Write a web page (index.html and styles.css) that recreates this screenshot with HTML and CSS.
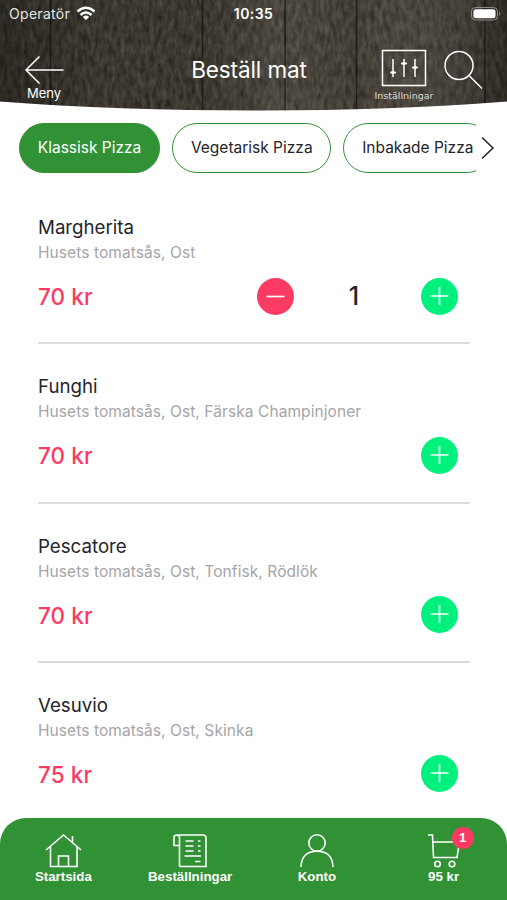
FILE: index.html
```html
<!DOCTYPE html>
<html lang="sv">
<head>
  <meta charset="UTF-8" />
  <meta name="viewport" content="width=device-width, initial-scale=1.0"/>
  <title>Beställ mat</title>
  <link rel="stylesheet" href="styles.css">
</head>
<body>

  <div class="app">
    <header class="header">
      <svg class="wood" viewBox="0 0 507 112" preserveAspectRatio="none">
        <defs>
          <filter id="grain" x="0" y="0" width="100%" height="100%" color-interpolation-filters="sRGB">
            <feTurbulence type="fractalNoise" baseFrequency="0.24 0.09" numOctaves="4" seed="7"/>
            <feColorMatrix values="0.22 0.08 0 0 0.095  0.22 0.08 0 0 0.08  0.2 0.08 0 0 0.055  0 0 0 0 1"/>
          </filter>
          <clipPath id="curve">
            <path d="M0 0H507V101.500Q390 110.500 260 110.500Q120 110.500 0 101.500Z"/>
          </clipPath>
          <linearGradient id="shade">
            <stop offset="0" stop-color="#000" stop-opacity=".3"/>
            <stop offset=".2" stop-color="#000" stop-opacity=".06"/>
            <stop offset=".4" stop-color="#000" stop-opacity=".04"/>
            <stop offset=".55" stop-color="#fff" stop-opacity=".07"/>
            <stop offset=".7" stop-color="#fff" stop-opacity=".02"/>
            <stop offset="1" stop-color="#000" stop-opacity=".28"/>
          </linearGradient>
        </defs>
        <g clip-path="url(#curve)">
          <rect width="507" height="112" filter="url(#grain)"/>
          <rect width="507" height="112" fill="url(#shade)"/>
          <g stroke="#12100d" stroke-opacity=".7" stroke-width="1.500">
            <path d="M50.500 0V112M202.500 0V112M285 0V112M356.500 0V112M485 0V112"/>
          </g>
        </g>
      </svg>

      <div class="status">
        <div class="carrier">
          <span>Operatör</span>
          <svg width="20" height="15" viewBox="0 0 20 15" fill="none" stroke="#fff" stroke-width="2.500">
            <path d="M1.500 5.500Q10 -2 18.500 5.500M4.500 9Q10 4 15.500 9"/>
            <path d="M10 14L6.800 10.900Q10 8.300 13.200 10.900Z" fill="#fff" stroke="none"/>
          </svg>
        </div>
        <div class="clock">10:35</div>
        <svg class="battery" width="30" height="14" viewBox="0 0 30 14">
          <rect x="0.500" y="0.500" width="26" height="12.500" rx="4" fill="none" stroke="#8f8c88"/>
          <rect x="2.500" y="2.300" width="22" height="9" rx="2.500" fill="#fff"/>
          <path d="M28 4.500Q30 6.700 28 9Z" fill="#8f8c88"/>
        </svg>
      </div>

      <nav class="navbar">
        <div class="nav-back">
          <svg width="40" height="30" viewBox="0 0 40 30" fill="none" stroke="#fff" stroke-width="1.500">
            <path d="M39.500 15H2M15.500 1.500L2 15L15.500 28.500"/>
          </svg>
          <span>Meny</span>
        </div>
        <h1 class="title">Beställ mat</h1>
        <div class="nav-actions">
          <div class="settings">
            <svg width="46" height="38" viewBox="0 0 46 38" fill="none" stroke="#fff" stroke-width="1.500">
              <rect x="1.500" y="1.500" width="43" height="35"/>
              <path d="M12 10V28M23 10V28M34 10V28M9 23.500H15M20 14.500H26M31 18.500H37"/>
              <path d="M10.500 23.500H13.500M21.500 14.500H24.500M32.500 18.500H35.500" stroke-width="3"/>
            </svg>
            <span>Inställningar</span>
          </div>
          <svg class="search" width="40" height="40" viewBox="0 0 40 40" fill="none" stroke="#fff" stroke-width="1.500">
            <circle cx="16" cy="15.500" r="14"/>
            <path d="M26.500 26L39 38.500"/>
          </svg>
        </div>
      </nav>
    </header>

    <div class="categories">
      <div class="chips">
        <div class="chip active"><span>Klassisk Pizza</span></div>
        <div class="chip"><span>Vegetarisk Pizza</span></div>
        <div class="chip"><span>Inbakade Pizza</span></div>
      </div>
      <svg class="next" width="14" height="24" viewBox="0 0 14 24" fill="none" stroke="#222" stroke-width="1.500">
        <path d="M1 1.500L12 12L1 22.500"/>
      </svg>
    </div>

    <main class="menu">
      <div class="item">
        <h2>Margherita</h2>
        <p>Husets tomatsås, Ost</p>
        <div class="row">
          <span class="price">70 kr</span>
          <div class="stepper">
            <button class="btn minus"><svg width="37" height="37" viewBox="0 0 37 37"><path d="M9.500 18.500H27.500"/></svg></button>
            <span class="count">1</span>
            <button class="btn plus"><svg width="37" height="37" viewBox="0 0 37 37"><path d="M9.500 18H27.500M18.500 9V27"/></svg></button>
          </div>
        </div>
      </div>

      <div class="item">
        <h2>Funghi</h2>
        <p>Husets tomatsås, Ost, Färska Champinjoner</p>
        <div class="row">
          <span class="price">70 kr</span>
          <button class="btn plus"><svg width="37" height="37" viewBox="0 0 37 37"><path d="M9.500 18H27.500M18.500 9V27"/></svg></button>
        </div>
      </div>

      <div class="item">
        <h2>Pescatore</h2>
        <p>Husets tomatsås, Ost, Tonfisk, Rödlök</p>
        <div class="row">
          <span class="price">70 kr</span>
          <button class="btn plus"><svg width="37" height="37" viewBox="0 0 37 37"><path d="M9.500 18H27.500M18.500 9V27"/></svg></button>
        </div>
      </div>

      <div class="item">
        <h2>Vesuvio</h2>
        <p>Husets tomatsås, Ost, Skinka</p>
        <div class="row">
          <span class="price">75 kr</span>
          <button class="btn plus"><svg width="37" height="37" viewBox="0 0 37 37"><path d="M9.500 18H27.500M18.500 9V27"/></svg></button>
        </div>
      </div>
    </main>

    <footer class="tabbar">
      <div class="tab">
        <svg width="38" height="36" viewBox="0 0 38 36">
          <path d="M2 17L19.500 2L37 17M6.500 14V33.500H33V14M14.500 33.500V23H24.500V33.500M28.500 3V9"/>
        </svg>
        <span>Startsida</span>
      </div>
      <div class="tab">
        <svg width="38" height="36" viewBox="0 0 38 36">
          <path d="M8.500 33.500V4.500Q8.500 2 5.700 2Q3 2 3 4.500V12.500H8.500M5.700 2H32Q35 2 35 5V33.500H8.500"/>
          <path d="M14.500 8H22.500M14.500 13H22.500M14.500 18H22.500M27 8H29.500M27 13H29.500M27 18H29.500M13.500 23H30M24 28.500H29.500"/>
        </svg>
        <span>Beställningar</span>
      </div>
      <div class="tab">
        <svg width="38" height="36" viewBox="0 0 38 36">
          <circle cx="19" cy="10" r="8.200"/>
          <path d="M3 34Q3.500 18.200 19 18.200Q34.500 18.200 35 34"/>
        </svg>
        <span>Konto</span>
      </div>
      <div class="tab">
        <div class="cart">
          <svg width="38" height="36" viewBox="0 0 38 36">
            <path d="M3 2H7.500L8.500 24.500H32L34.500 9H8"/>
            <circle cx="12.500" cy="31" r="2.800"/>
            <circle cx="27" cy="31" r="2.800"/>
          </svg>
          <span class="badge">1</span>
        </div>
        <span>95 kr</span>
      </div>
    </footer>
  </div>

</body>
</html>
```
FILE: styles.css
```css
:root {
  --green: #319135;
  --plus: #00f07e;
  --pink: #fb3b64;
  --text: #24242c;
}

* {
  margin: 0;
  padding: 0;
  box-sizing: border-box;
}

body {
  font-family: 'Inter', sans-serif;
  background: #fff;
  color: var(--text);
  height: 100vh;
  overflow: hidden;
}

svg {
  display: block;
  flex-shrink: 0;
}

.app {
  height: 100vh;
  display: flex;
  flex-direction: column;
}

.header {
  position: relative;
  height: 112px;
  flex-shrink: 0;
  color: #fff;
}

.wood {
  position: absolute;
  inset: 0;
  width: 100%;
  height: 100%;
  z-index: -1;
}

.status {
  display: grid;
  grid-template-columns: 1fr auto 1fr;
  align-items: center;
  height: 27px;
  padding: 0 6px 0 9px;
  font-size: 14px;
}

.carrier {
  display: flex;
  align-items: center;
  gap: 6px;
  letter-spacing: 0.3px;
  color: #e6e5e3;
}

.clock {
  font-weight: 600;
  letter-spacing: 0.4px;
  margin-right: 3px;
}

.battery {
  justify-self: end;
}

.navbar {
  display: grid;
  grid-template-columns: 1fr auto 1fr;
  height: 80px;
  padding: 0 24px 0 24px;
}

.nav-back {
  display: flex;
  flex-direction: column;
  align-items: center;
  width: 40px;
  padding-top: 28px;
  font-size: 13px;
  line-height: 16px;
}

.title {
  padding-top: 28px;
  margin-right: 9px;
  font-size: 22.5px;
  font-weight: 400;
  line-height: 30px;
  letter-spacing: -0.1px;
}

.nav-actions {
  display: flex;
  justify-content: flex-end;
  gap: 9px;
  padding-top: 22px;
}

.settings {
  display: flex;
  flex-direction: column;
  align-items: center;
  gap: 3px;
  width: 60px;
  font-family: 'DejaVu Sans', sans-serif;
  font-size: 9.5px;
  line-height: 12px;
  color: #dddbd8;
}

.search {
  margin-top: 1px;
}

.categories {
  display: flex;
  align-items: center;
  gap: 5px;
  height: 73px;
  flex-shrink: 0;
  padding: 0 0 2px 19px;
}

.chips {
  display: flex;
  gap: 12px;
  width: 457px;
  overflow: hidden;
}

.chip {
  display: flex;
  align-items: center;
  justify-content: center;
  flex-shrink: 0;
  height: 50px;
  padding: 0 17.8px;
  border: 1.5px solid var(--green);
  border-radius: 25px;
  font-size: 15.5px;
  white-space: nowrap;
}

.chip.active {
  background: var(--green);
  color: #fff;
}

.menu {
  flex: 1;
  min-height: 0;
  overflow: hidden;
  padding: 0 37px 0 38px;
}

.item {
  height: 159.3px;
  padding-top: 31px;
  border-bottom: 2px solid #dcdcde;
}

.item h2 {
  font-size: 18.7px;
  font-weight: 400;
  line-height: 24px;
}

.item p {
  margin-top: 2px;
  font-size: 15.5px;
  line-height: 22px;
  letter-spacing: 0.08px;
  color: #a5a5a8;
}

.row {
  display: flex;
  align-items: center;
  justify-content: space-between;
  height: 37px;
  margin-top: 13.5px;
  padding-right: 12px;
}

.price {
  font-size: 22.5px;
  font-weight: 500;
  letter-spacing: 0.1px;
  color: var(--pink);
  margin-top: 1px;
}

.stepper {
  display: flex;
  align-items: center;
  justify-content: space-between;
  width: 201px;
}

.count {
  margin-right: 7px;
  font-size: 25px;
  font-weight: 500;
  line-height: 37px;
}

.btn {
  width: 37px;
  height: 37px;
  border: none;
  border-radius: 50%;
  cursor: pointer;
}

.btn path {
  stroke: #fff;
  stroke-width: 1.7;
}

.minus {
  background: var(--pink);
}

.plus {
  background: var(--plus);
}

.tabbar {
  display: grid;
  grid-template-columns: repeat(4, 1fr);
  height: 82px;
  flex-shrink: 0;
  background: var(--green);
  border-radius: 26px 26px 0 0;
  color: #fff;
  font-family: 'Liberation Sans', sans-serif;
  font-size: 13.3px;
  font-weight: bold;
}

.tab {
  display: flex;
  flex-direction: column;
  align-items: center;
  padding-top: 15px;
  line-height: 15px;
}

.tab svg {
  fill: none;
  stroke: #fff;
  stroke-width: 1.6;
}

.cart {
  position: relative;
}

.badge {
  position: absolute;
  top: -6px;
  right: -11px;
  width: 22px;
  height: 22px;
  border-radius: 50%;
  background: var(--pink);
  line-height: 22px;
  text-align: center;
}
```
